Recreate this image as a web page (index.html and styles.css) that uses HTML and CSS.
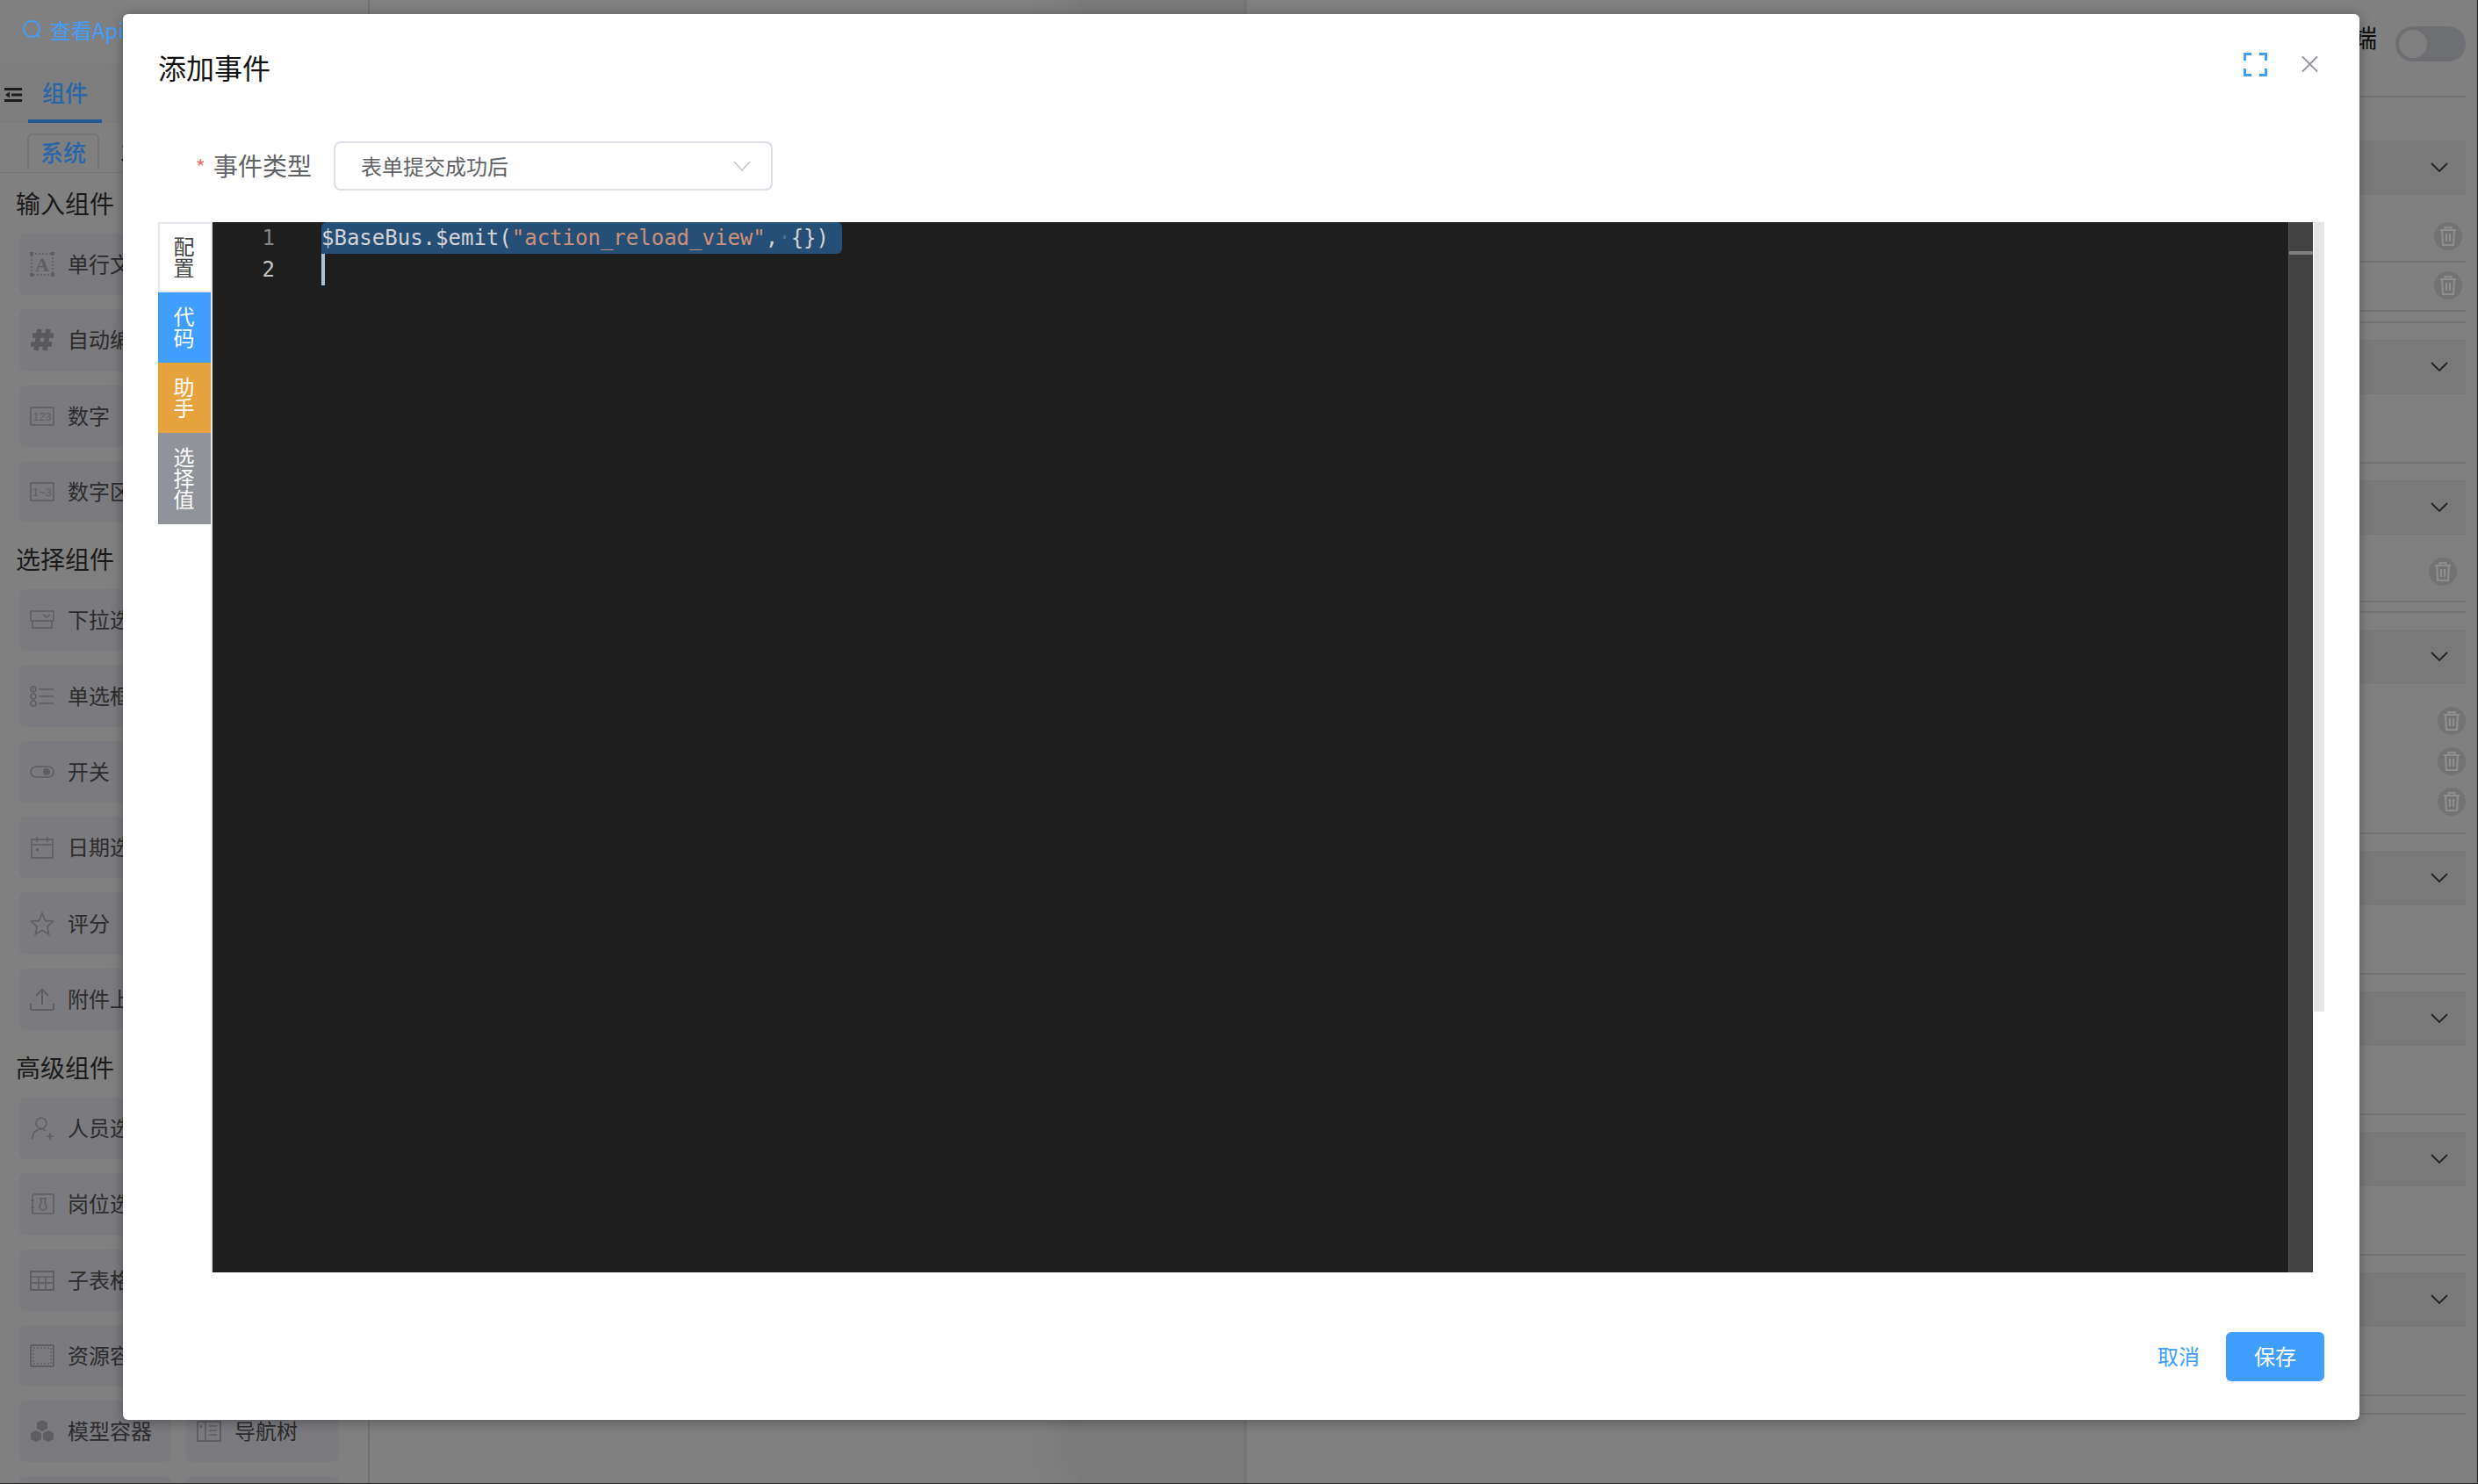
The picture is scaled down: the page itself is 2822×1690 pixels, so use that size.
FILE: index.html
```html
<!DOCTYPE html>
<html lang="zh-CN">
<head>
<meta charset="utf-8">
<title>添加事件</title>
<link rel="stylesheet" href="styles.css">
</head>
<body>
<div class="page">
  <aside class="left-panel">
    <div class="api-bar">
      <svg class="api-icon" viewBox="0 0 22 22"><circle cx="10" cy="10" r="9"/><path d="M16.5 16.5l3 3"/></svg>
      <span class="api-link">查看Api</span>
    </div>
    <div class="main-tabs">
      <svg class="collapse-icon" viewBox="0 0 20 16"><path d="M0 1.5h20M8 8h12M0 14.5h20"/><path class="solid" d="M6 4.5v7L1 8z"/></svg>
      <span class="main-tab main-tab--active">组件</span>
      <span class="main-tab">大纲</span>
    </div>
    <div class="sub-tabs">
      <span class="sub-tab sub-tab--active">系统</span>
      <span class="sub-tab">业务</span>
    </div>
    <div class="palette">
      <section class="palette-section">
        <h3 class="palette-title">输入组件</h3>
        <div class="palette-grid">
          <div class="card card--solo"><svg class="card-icon" viewBox="0 0 28 28"><rect class="dotted" x="2" y="2" width="24" height="24"/><path class="solid" d="M0 0h4v4H0zM24 0h4v4h-4zM0 24h4v4H0zM24 24h4v4h-4z"/><text class="icon-a" x="14" y="22">A</text></svg><span>单行文本</span></div>
          <div class="card card--solo"><svg class="card-icon" viewBox="0 0 28 28"><path class="thick" d="M11 2L7 26M21 2l-4 24M3 9h24M1 19h24"/></svg><span>自动编号</span></div>
          <div class="card card--solo"><svg class="card-icon" viewBox="0 0 28 28"><rect x="1" y="4" width="26" height="20" rx="1"/><text class="icon-num" x="14" y="18.5">123</text></svg><span>数字</span></div>
          <div class="card card--solo"><svg class="card-icon" viewBox="0 0 28 28"><rect x="1" y="4" width="26" height="20" rx="1"/><text class="icon-num" x="14" y="18.5">1~3</text></svg><span>数字区间</span></div>
        </div>
      </section>
      <section class="palette-section">
        <h3 class="palette-title">选择组件</h3>
        <div class="palette-grid">
          <div class="card card--solo"><svg class="card-icon" viewBox="0 0 28 28"><path d="M1 15V4h26v11zM3 15v8h22v-8M15 8l4 3 4-3"/></svg><span>下拉选择</span></div>
          <div class="card card--solo"><svg class="card-icon" viewBox="0 0 28 28"><circle cx="4" cy="6" r="3"/><circle cx="4" cy="14" r="3"/><circle cx="4" cy="22" r="3"/><circle class="solid" cx="4" cy="6" r="1"/><path d="M10 6h17M10 14h17M10 22h17"/></svg><span>单选框组</span></div>
          <div class="card card--solo"><svg class="card-icon" viewBox="0 0 28 28"><rect x="1" y="8" width="26" height="12" rx="6"/><circle class="solid" cx="19" cy="14" r="4"/></svg><span>开关</span></div>
          <div class="card card--solo"><svg class="card-icon" viewBox="0 0 28 28"><path d="M2 5h24v21H2zM2 11h24M8 2v6M20 2v6"/><path class="solid" d="M7 15h3v3H7z"/></svg><span>日期选择</span></div>
          <div class="card card--solo"><svg class="card-icon" viewBox="0 0 28 28"><path d="M14 2l3.6 8.4 9 .8-6.8 6 2 8.8L14 21.4 6.200 26l2-8.800-6.800-6 9-.8z"/></svg><span>评分</span></div>
          <div class="card card--solo"><svg class="card-icon" viewBox="0 0 28 28"><path class="medium" d="M1 19v6a1 1 0 0 0 1 1h24a1 1 0 0 0 1-1v-6M14 20V3M7 10l7-7 7 7"/></svg><span>附件上传</span></div>
        </div>
      </section>
      <section class="palette-section palette-section--advanced">
        <h3 class="palette-title">高级组件</h3>
        <div class="palette-grid">
          <div class="card card--solo"><svg class="card-icon" viewBox="0 0 28 28"><circle cx="13" cy="8" r="6"/><path d="M3 26c0-7 4-11 10-11 2 0 4 .5 5 1.500M19 23h8M23 19v8"/></svg><span>人员选择</span></div>
          <div class="card card--solo"><svg class="card-icon" viewBox="0 0 28 28"><path d="M3 5a2 2 0 0 1 2-2h21a1 1 0 0 1 1 1v20a1 1 0 0 1-1 1H5a2 2 0 0 1-2-2zM1 10h4M1 18h4M12 8h6l-1 4 2 5a4 4 0 1 1-8 0l2-5z"/></svg><span>岗位选择</span></div>
          <div class="card card--solo"><svg class="card-icon" viewBox="0 0 28 28"><rect class="medium" x="1" y="4" width="26" height="21"/><path d="M1 10h26M1 17h26M10 10v15M18 10v15"/></svg><span>子表格</span></div>
          <div class="card card--solo"><svg class="card-icon" viewBox="0 0 28 28"><rect class="medium" x="1" y="2" width="26" height="24" rx="1"/><rect class="dotted" x="4" y="5" width="20" height="18"/></svg><span>资源容器</span></div>
          <div class="card card--solo"><svg class="card-icon" viewBox="0 0 28 28"><path class="solid" d="M14 1l6 3v7l-6 3-6-3V4zM7 13l6 3v7l-6 3-6-3v-7zM21 13l6 3v7l-6 3-6-3v-7z"/></svg><span>模型容器</span></div>
          <div class="card"><svg class="card-icon" viewBox="0 0 28 28"><rect class="medium" x="1" y="3" width="26" height="22"/><path d="M10 3v22M14 8h9M14 13h9M14 18h9"/><path class="solid" d="M4 7h2v3H4z"/></svg><span>导航树</span></div>
          <div class="card"></div>
          <div class="card"></div>
        </div>
      </section>
    </div>
  </aside>
  <main class="canvas"></main>
  <div class="side-strip"></div>
  <aside class="right-panel">
    <div class="right-header">
      <span class="device-label">端</span>
      <span class="toggle"><span class="toggle-knob"></span></span>
    </div>
    <section class="prop prop--first">
      <div class="prop-band"><svg class="chev" viewBox="0 0 20 11"><path d="M1 1l9 9 9-9"/></svg></div>
      <div class="trash-row trash-row--tall trash-row--mid"><svg class="trash" viewBox="0 0 32 32"><circle class="trash-bg" cx="16" cy="16" r="16"/><path class="trash-line" d="M7 9h18M12.500 9V6h7v3M9 9l1 17h12l1-17M14 13v9M18 13v9"/></svg></div>
      <div class="trash-row trash-row--short trash-row--mid"><svg class="trash" viewBox="0 0 32 32"><circle class="trash-bg" cx="16" cy="16" r="16"/><path class="trash-line" d="M7 9h18M12.500 9V6h7v3M9 9l1 17h12l1-17M14 13v9M18 13v9"/></svg></div>
    </section>
    <div class="prop-rule prop-rule--a"></div>
    <section class="prop">
      <div class="prop-band"><svg class="chev" viewBox="0 0 20 11"><path d="M1 1l9 9 9-9"/></svg></div>
      <div class="prop-body"></div>
    </section>
    <section class="prop">
      <div class="prop-band"><svg class="chev" viewBox="0 0 20 11"><path d="M1 1l9 9 9-9"/></svg></div>
      <div class="prop-body prop-body--trash"><svg class="trash" viewBox="0 0 32 32"><circle class="trash-bg" cx="16" cy="16" r="16"/><path class="trash-line" d="M7 9h18M12.500 9V6h7v3M9 9l1 17h12l1-17M14 13v9M18 13v9"/></svg></div>
    </section>
    <div class="prop-rule prop-rule--b"></div>
    <section class="prop">
      <div class="prop-band"><svg class="chev" viewBox="0 0 20 11"><path d="M1 1l9 9 9-9"/></svg></div>
      <div class="prop-body prop-body--stack">
        <svg class="trash" viewBox="0 0 32 32"><circle class="trash-bg" cx="16" cy="16" r="16"/><path class="trash-line" d="M7 9h18M12.500 9V6h7v3M9 9l1 17h12l1-17M14 13v9M18 13v9"/></svg>
        <svg class="trash" viewBox="0 0 32 32"><circle class="trash-bg" cx="16" cy="16" r="16"/><path class="trash-line" d="M7 9h18M12.500 9V6h7v3M9 9l1 17h12l1-17M14 13v9M18 13v9"/></svg>
        <svg class="trash" viewBox="0 0 32 32"><circle class="trash-bg" cx="16" cy="16" r="16"/><path class="trash-line" d="M7 9h18M12.500 9V6h7v3M9 9l1 17h12l1-17M14 13v9M18 13v9"/></svg>
      </div>
    </section>
    <section class="prop">
      <div class="prop-band"><svg class="chev" viewBox="0 0 20 11"><path d="M1 1l9 9 9-9"/></svg></div>
      <div class="prop-body"></div>
    </section>
    <section class="prop">
      <div class="prop-band"><svg class="chev" viewBox="0 0 20 11"><path d="M1 1l9 9 9-9"/></svg></div>
      <div class="prop-body"></div>
    </section>
    <section class="prop">
      <div class="prop-band"><svg class="chev" viewBox="0 0 20 11"><path d="M1 1l9 9 9-9"/></svg></div>
      <div class="prop-body"></div>
    </section>
    <section class="prop">
      <div class="prop-band"><svg class="chev" viewBox="0 0 20 11"><path d="M1 1l9 9 9-9"/></svg></div>
      <div class="prop-body"></div>
    </section>
    <div class="prop-rule prop-rule--c"></div>
  </aside>

  <div class="modal" role="dialog">
    <header class="modal-header">
      <h2 class="modal-title">添加事件</h2>
      <div class="modal-actions">
        <svg class="icon-full" viewBox="0 0 27 27"><path d="M1.500 9V1.500H9M18 1.500h7.500V9M1.500 18v7.500H9M18 25.500h7.500V18"/></svg>
        <svg class="icon-close" viewBox="0 0 20 20"><path d="M1 1l18 18M19 1L1 19"/></svg>
      </div>
    </header>
    <div class="form-row">
      <label class="form-label"><span class="required">*</span>事件类型</label>
      <div class="select">
        <span class="select-value">表单提交成功后</span>
        <svg class="select-arrow" viewBox="0 0 20 12"><path d="M1 1l9 10 9-10"/></svg>
      </div>
    </div>
    <div class="workbench">
      <nav class="side-tabs">
        <span class="side-tab side-tab--plain">配置</span>
        <span class="side-tab side-tab--blue">代码</span>
        <span class="side-tab side-tab--orange">助手</span>
        <span class="side-tab side-tab--gray">选择值</span>
      </nav>
      <div class="editor">
        <div class="gutter">
          <div class="line-no">1</div>
          <div class="line-no line-no--active">2</div>
        </div>
        <div class="code">
          <div class="code-line"><span class="selection">$BaseBus.$emit(<span class="str">"action_reload_view"</span>,<span class="ws">·</span>{})</span></div>
          <div class="code-line"><span class="cursor"></span></div>
        </div>
        <div class="minimap"><div class="minimap-thumb"></div></div>
      </div>
      <div class="outer-scroll"></div>
    </div>
    <footer class="modal-footer">
      <span class="btn-text">取消</span>
      <span class="btn-primary">保存</span>
    </footer>
  </div>
</div>
</body>
</html>
```

FILE: styles.css
```css
* { box-sizing: border-box; }
html, body { margin: 0; padding: 0; height: 100%; background: #1e1e1e; overflow: hidden; }
body { font-family: "Noto Sans CJK SC", "Liberation Sans", sans-serif; }

.page {
  position: relative;
  width: 2821px;
  height: 1689px;
  background: #808080;
  display: flex;
  overflow: hidden;
}

/* left component palette */
.left-panel { width: 421px; flex: none; border-right: 2px solid #707070; overflow: hidden; }
.api-bar { height: 74px; display: flex; align-items: center; padding: 0 0 6px 26px; gap: 9px; border-bottom: 1px solid #7a7a7c; }
.api-icon { width: 22px; height: 22px; fill: none; stroke: #409eff; stroke-width: 1.800; }
.api-link { font-size: 24px; line-height: 28px; color: #409eff; }
.main-tabs { height: 66px; display: flex; align-items: flex-start; padding-left: 5px; border-bottom: 1px solid #7a7a7c; background: #7e7e7e; }
.collapse-icon { width: 20px; height: 16px; margin-top: 26px; fill: none; stroke: #1c1c1c; stroke-width: 3; flex: none; }
.collapse-icon .solid { fill: #1c1c1c; stroke: none; }
.main-tab { font-size: 26px; line-height: 62px; height: 66px; color: #1e1e1e; padding: 0 17px; margin-left: 0; }
.main-tab--active { color: #2866a9; font-weight: 500; border-bottom: 4px solid #215a97; margin-left: 7px; width: 84px; text-align: center; padding: 0; margin-right: 17px; }
.sub-tabs { height: 57px; display: flex; align-items: flex-end; padding: 0 0 4px 31px; border-bottom: 1px solid #767678; gap: 24px; }
.sub-tab { font-size: 26px; height: 40px; line-height: 37px; color: #1e1e1e; }
.sub-tab--active { width: 82px; text-align: center; color: #2866a9; font-weight: 500; border: 2px solid #747474; border-bottom: 0; border-radius: 6px 6px 0 0; }
.palette { padding: 1px 0 0 22px; }
.palette-section + .palette-section { margin-top: 8px; }
.palette-section + .palette-section--advanced { margin-top: 9px; }
.palette-title { margin: 0 0 0 -4px; height: 68px; line-height: 66px; font-size: 28px; font-weight: 400; color: #1a1a1a; }
.palette-grid { display: grid; grid-template-columns: 173px 174px; column-gap: 17px; row-gap: 16px; }
.card { height: 70.3px; border-radius: 8px; background: #7a7a7f; display: flex; align-items: center; padding-left: 12px; gap: 16px; font-size: 24px; color: #2c2c2c; white-space: nowrap; }
.card span { margin-bottom: 3px; margin-left: -1px; }
.card--solo { grid-column: 1; }
.card-icon { width: 28px; height: 28px; flex: none; fill: none; stroke: #5e5e62; stroke-width: 1.600; }
.card-icon .solid { fill: #5e5e62; stroke: none; }
.card-icon .thick { stroke-width: 5.500; stroke: #5a5a5d; }
.card-icon .medium { stroke-width: 2; }
.card-icon .dotted { stroke-dasharray: 2 2; }
.icon-a { font-family: "Liberation Serif", serif; font-size: 22px; font-weight: 700; fill: #5e5e62; stroke: none; text-anchor: middle; }
.icon-num { font-family: "Liberation Sans", sans-serif; font-size: 13px; fill: #5e5e62; stroke: none; text-anchor: middle; }

/* centre */
.canvas { flex: 1; }
.side-strip { width: 192px; flex: none; background: #7a7a7a; border-right: 4px solid #74757a; box-shadow: -10px 0 50px rgba(0, 0, 0, 0.09); }

/* right properties */
.right-panel { width: 1401px; flex: none; padding-right: 13px; position: relative; background: #808080; }
.right-header { height: 111px; border-bottom: 2px solid #727276; display: flex; justify-content: flex-end; align-items: flex-start; padding-top: 30px; position: relative; }
.device-label { position: absolute; right: 101px; top: 22px; font-size: 28px; line-height: 40px; color: #0c0c0c; }
.toggle { width: 80px; height: 40px; border-radius: 20px; background: #6e6f73; padding: 4px; }
.toggle-knob { display: block; width: 32px; height: 32px; border-radius: 50%; background: #808080; }
.prop { padding-top: 19px; }
.prop--first { padding-top: 49px; }
.prop-band { height: 62px; background: #797979; display: flex; align-items: center; justify-content: flex-end; padding: 0 20px 0 0; }
.chev { width: 20px; height: 11px; margin-bottom: 2px; fill: none; stroke: #222; stroke-width: 1.800; }
.prop-body { height: 79px; border-bottom: 2px solid #727276; }
.prop-body--trash { height: 77px; padding: 26px 10px 0 0; display: flex; justify-content: flex-end; align-items: flex-start; }
.prop-body--stack { height: 171px; padding-top: 26px; display: flex; flex-direction: column; align-items: flex-end; gap: 14px; }
.trash { width: 32px; height: 32px; display: block; }
.trash-bg { fill: #737373; }
.trash-line { fill: none; stroke: #8e8e8e; stroke-width: 2.200; }
.trash-row { display: flex; justify-content: flex-end; border-bottom: 2px solid #727276; padding-right: 4px; }
.trash-row--tall { height: 77px; padding-top: 31px; }
.trash-row--short { height: 56px; padding-top: 10px; }
.prop-rule { height: 2px; background: #727276; }
.prop-rule--a { margin-top: 11px; }
.prop-rule--b { margin-top: 10px; }
.prop-rule--c { margin-top: 19px; }

/* dialog */
.modal {
  position: absolute;
  left: 140px;
  top: 16px;
  width: 2547px;
  height: 1601px;
  background: #fff;
  border-radius: 6px;
  box-shadow: 0 2px 14px rgba(0, 0, 0, 0.32);
  padding: 44px 40px;
  display: flex;
  flex-direction: column;
}
.modal-header { height: 36px; display: flex; justify-content: space-between; align-items: flex-start; }
.modal-title { margin: -2px 0 0; font-size: 32px; line-height: 36px; font-weight: 400; color: #111; }
.modal-actions { display: flex; align-items: flex-start; gap: 39px; padding-right: 7px; }
.icon-full { width: 27px; height: 27px; fill: none; stroke: #409eff; stroke-width: 3; }
.icon-close { width: 19px; height: 20px; margin-top: 3px; fill: none; stroke: #909399; stroke-width: 2; }
.form-row { margin-top: 65px; height: 56px; display: flex; align-items: center; }
.form-label { width: 200px; padding-right: 25px; text-align: right; font-size: 28px; line-height: 38px; margin-bottom: 1px; color: #606266; white-space: nowrap; }
.required { color: #f56c6c; font-size: 24px; margin-right: 9px; }
.select { width: 500px; height: 56px; border: 2px solid #dcdfe6; border-radius: 8px; display: flex; align-items: center; justify-content: space-between; padding: 0 23px 0 29px; font-size: 24px; color: #606266; }
.select-value { margin-bottom: 1px; }
.select-arrow { width: 20px; height: 12px; fill: none; stroke: #c0c4cc; stroke-width: 1.500; }

.workbench { margin-top: 36px; height: 1196px; display: flex; align-items: stretch; }
.side-tabs { width: 62px; flex: none; border-right: 2px solid #e4e7ed; display: flex; flex-direction: column; align-items: stretch; }
.side-tab { writing-mode: vertical-rl; display: flex; align-items: center; justify-content: center; font-size: 24px; line-height: 56px; padding-right: 2px; color: #fff; white-space: nowrap; }
.side-tab--plain { color: #444; background: #fff; height: 80px; border: 2px solid #e4e7ed; border-right: 0; padding-right: 4px; }
.side-tab--blue { background: #409eff; height: 80px; }
.side-tab--orange { background: #e6a23c; height: 80px; }
.side-tab--gray { background: #909399; height: 104px; }

.editor { width: 2392px; flex: none; background: #1e1e1e; display: flex; font-family: "DejaVu Sans Mono", monospace; font-size: 24px; line-height: 36px; }
.gutter { width: 124px; flex: none; text-align: right; padding-right: 53px; }
.line-no { height: 36px; color: #858585; }
.line-no--active { color: #c6c6c6; }
.code { flex: 1; color: #d4d4d4; }
.code-line { height: 36px; white-space: pre; }
.selection { display: inline-block; height: 36px; background: #264f78; padding-right: 15px; border-radius: 6px 6px 6px 0; }
.str { color: #ce9178; }
.ws { color: #4a7196; }
.cursor { display: block; width: 4px; height: 36px; background: #aec2d6; }
.minimap { width: 28px; flex: none; background: #424242; border-left: 1px solid #5a5a5a; padding-top: 33px; }
.minimap-thumb { height: 4px; background: #808080; }
.outer-scroll { width: 12px; height: 899px; margin-left: 1px; background: #e4e4e4; flex: none; }

.modal-footer { margin-top: 68px; height: 56px; display: flex; justify-content: flex-end; align-items: center; gap: 30px; font-size: 24px; }
.btn-text { color: #409eff; margin-bottom: 3px; }
.btn-primary { width: 112px; height: 56px; line-height: 53px; text-align: center; border-radius: 6px; background: #409eff; color: #fff; }
```
